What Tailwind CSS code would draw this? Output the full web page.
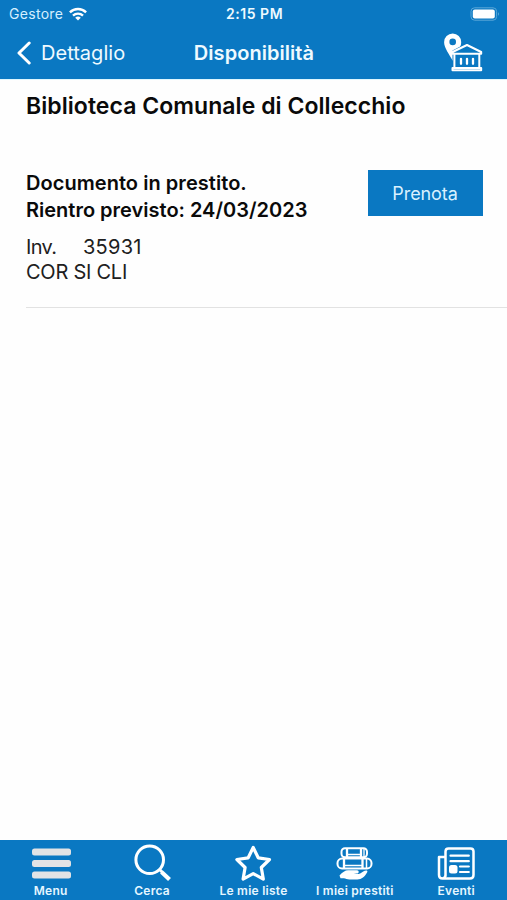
<!DOCTYPE html>
<html lang="it">
<head>
<meta charset="utf-8">
<title>Disponibilità</title>
<script src="https://cdn.jsdelivr.net/npm/@tailwindcss/browser@4"></script>
</head>
<body class="bg-white">
<div class="flex h-[900px] w-[507px] flex-col overflow-hidden bg-[#fefefe] font-['Inter',sans-serif] text-[#0a0a0a]">
  <header class="h-[79px] shrink-0 bg-[#0a78c2] text-[#eefaff]">
    <div class="grid h-[27px] grid-cols-3 items-center pr-[7px] pl-[9px]">
      <div class="flex items-center gap-[6px]">
        <span class="text-[14px] leading-[20px] tracking-[0.3px] text-[#d5efff]">Gestore</span>
        <svg class="h-[14px] w-[18px]" viewBox="0 0 18 14" fill="none" stroke="#fff" stroke-width="2.4"><path d="M.9 5.3a11.6 11.6 0 0 1 16.2 0M4 8.600a7.200 7.200 0 0 1 10 0"/><path d="M9 13.500 6.200 10.800a4 4 0 0 1 5.600 0Z" fill="#fff" stroke="none"/></svg>
      </div>
      <span class="text-center text-[14px] leading-[20px] font-semibold tracking-[0.55px] whitespace-nowrap">2:15 PM</span>
      <svg class="h-[14px] w-[30px] justify-self-end" viewBox="0 0 30 14"><rect x="1" y=".8" width="25.6" height="12.4" rx="3.6" fill="none" stroke="#5aa7d8"/><rect x="2.8" y="2.6" width="22" height="8.8" rx="2" fill="#fff"/><path d="M28 5q1.700 2 0 4Z" fill="#70b6df"/></svg>
    </div>
    <div class="grid h-[52px] grid-cols-3 items-center pr-[24px] pl-[17px]">
      <div class="flex items-center gap-[10px]">
        <svg class="h-[24px] w-[14px]" viewBox="0 0 14 24" fill="none" stroke="#fff" stroke-width="3" stroke-linecap="round" stroke-linejoin="round"><path d="M12.200 2 2 12l10.200 10"/></svg>
        <span class="text-[20px] leading-[26px] tracking-[0.02px]">Dettaglio</span>
      </div>
      <h1 class="pl-[8px] text-center text-[20px] leading-[26px] font-semibold tracking-[0.05px]">Disponibilità</h1>
      <svg class="mb-[2px] h-[39px] w-[40px] justify-self-end" viewBox="0 0 40 39"><path fill="#fff" fill-rule="evenodd" d="M9.700.5A8.600 8.600 0 0 0 1.100 9.200c0 6 5.600 12.300 8.600 18.600 3-6.300 8.500-12.600 8.500-18.600A8.600 8.600 0 0 0 9.700.5Zm0 5.100a3.300 3.300 0 1 1 0 6.600 3.300 3.300 0 0 1 0-6.600Z"/><path fill="#0a78c2" d="M9.500 17.500 24 10l16 8v21H9.500Z"/><g fill="none" stroke="#fff" stroke-width="2" stroke-linejoin="round"><path d="M9.500 19 24 12l14.200 7v1.700H9.500ZM11.400 21v13.500M36.300 21v13.500"/><path d="M9.500 37.200v-2.300h28.700v2.300Z"/><path stroke-width="2.300" stroke-linecap="round" d="M18 25.800v5M24 25.800v5M30 25.800v5"/></g></svg>
    </div>
  </header>
  <main class="grow border-t border-[#def7ff] pt-[11px] pl-[26px]">
    <h2 class="text-[23px] leading-[30px] font-semibold tracking-[0.05px] whitespace-nowrap">Biblioteca Comunale di Collecchio</h2>
    <section class="flex h-[187px] items-start justify-between border-b border-[#e2e2e2] pt-[49px] pr-[24px]">
      <div class="whitespace-nowrap">
        <p class="text-[20px] leading-[27px] font-semibold tracking-[0.05px]">Documento in prestito.</p>
        <p class="text-[20px] leading-[27px] font-semibold tracking-[0px]">Rientro previsto: 24/03/2023</p>
        <div class="pt-[11px] text-[20px] leading-[25px] text-[#202020]">
          <p class="flex"><span class="w-[57px] tracking-[-0.7px]">Inv.</span><span class="tracking-[0.25px]">35931</span></p>
          <p class="tracking-[-0.25px]">COR SI CLI</p>
        </div>
      </div>
      <button class="mr-[0.5px] h-[46px] w-[115px] bg-[#0a78c2] text-[18px] tracking-[-0.1px] text-[#d9f1ff]">Prenota</button>
    </section>
  </main>
  <nav class="grid h-[60px] shrink-0 grid-cols-5 bg-[#0a78c2] text-center text-[12px] leading-[16px] font-semibold tracking-[0.25px] whitespace-nowrap text-[#e5f6ff]">
    <div class="flex flex-col items-center pt-[3px]">
      <svg class="h-[40px] w-[40px]" viewBox="0 0 40 40" fill="#e2e3e5"><rect x="1" y="5.500" width="39" height="7" rx="2.500"/><rect x="1" y="17" width="39" height="7" rx="2.500"/><rect x="1" y="28.500" width="39" height="7" rx="2.500"/></svg>
      <span>Menu</span>
    </div>
    <div class="flex flex-col items-center pt-[3px]">
      <svg class="h-[40px] w-[40px]" viewBox="0 0 40 40" fill="none" stroke="#fff"><circle cx="17.700" cy="16.700" r="13.800" stroke-width="3"/><path d="m27.300 26.300 3 3" stroke-width="3"/><path d="m29.500 29 8 7.500" stroke-width="4.200"/></svg>
      <span>Cerca</span>
    </div>
    <div class="flex flex-col items-center pt-[3px]">
      <svg class="h-[40px] w-[40px]" viewBox="0 0 40 40" fill="none" stroke="#fff" stroke-width="3.200" stroke-linejoin="round"><path d="m20.200 4.500 5 10.300 11.300 1.700-8.200 8 2 11.600-10.100-5.500-10.100 5.500 2-11.600-8.200-8 11.300-1.700Z"/></svg>
      <span>Le mie liste</span>
    </div>
    <div class="flex flex-col items-center pt-[3px]">
      <svg class="h-[40px] w-[40px]" viewBox="0 0 40 40" fill="none" stroke="#fff" stroke-width="2"><rect x="6.500" y="5.300" width="25.500" height="8.900" rx="3.500"/><path d="M12 5.500v8.500M26 5.500v8.500" stroke-width="2.300"/><path d="M12 11.500h14M29 5.500v8.500" stroke-width="1.300"/><rect x="2.500" y="15.600" width="34" height="9.800" rx="4.500"/><path d="M9 15.500v9.500M27.500 15.500v9.500" stroke-width="2.300"/><path d="M31.500 15.500v9.500M9.200 22.400h18.300" stroke-width="1.500"/><path fill="#fff" stroke="none" d="M4.500 32.500c3-3.500 6-5.500 9-5.300h8.500c2.300 0 2.300 3 0 3.400h-3.300c4 1.300 7-.2 9.500-2.200 2.500-1.500 5-1.200 4 .8-2.300 4.500-5.600 7.200-9.800 7.200h-8c-2.300 0-3.800-.9-5.500-1.200H5.500Z"/></svg>
      <span>I miei prestiti</span>
    </div>
    <div class="flex flex-col items-center pt-[3px]">
      <svg class="h-[40px] w-[40px]" viewBox="0 0 40 40" fill="none" stroke="#fff" stroke-width="2.500" stroke-linecap="round" stroke-linejoin="round"><path d="M9.500 33V8.500q0-3 3-3h22q3 0 3 3V32q0 3.500-3.500 3.500H6.500Q3 35.500 3 32V14h6M9.500 31.500q0 4-3.500 4"/><g stroke-width="2.200"><path d="M14.500 12.700h18.300M14.500 18.200h18.300M24 23.500h8.800M24 29h8.800"/></g><rect x="13" y="22" width="8.500" height="8.500" rx="2.500" fill="#fff" stroke="none"/></svg>
      <span>Eventi</span>
    </div>
  </nav>
</div>
</body>
</html>
